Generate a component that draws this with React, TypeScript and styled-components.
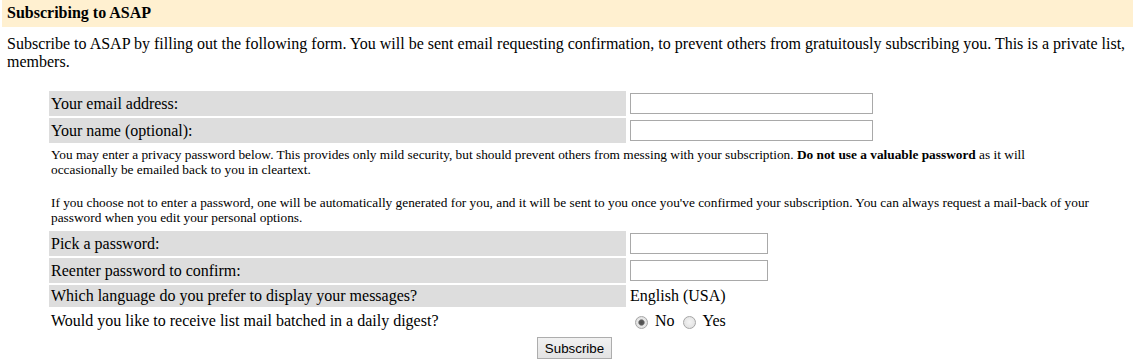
import React from "react";
import styled, { createGlobalStyle } from "styled-components";

const GlobalStyle = createGlobalStyle`
  html, body {
    margin: 0;
    padding: 0;
    background: #ffffff;
  }
  body {
    font-family: "Liberation Serif", "Times New Roman", serif;
    font-size: 16px;
    color: #000000;
  }
`;

const Page = styled.div`
  width: 1133px;
  height: 363px;
  overflow: hidden;
  padding: 0 0 0 2px;
  box-sizing: border-box;
`;

const Header = styled.h2`
  margin: 0;
  height: 27px;
  box-sizing: border-box;
  padding: 4px 5px 5px;
  background: #fff0d0;
  font-size: 16px;
  line-height: 18px;
  font-weight: bold;
  white-space: nowrap;
`;

const Intro = styled.p`
  margin: 8px 0 0;
  padding: 0 5px;
  line-height: 18px;
  white-space: nowrap;
`;

const FormGrid = styled.form`
  display: grid;
  grid-template-columns: 577px 345px 125px;
  column-gap: 2px;
  row-gap: 2px;
  padding: 2px;
  margin: 18px 0 0 45px;
  width: max-content;
`;

const Cell = styled.div<{ $shaded?: boolean }>`
  display: flex;
  align-items: center;
  padding: 2px;
  min-height: 18px;
  background: ${(p) => (p.$shaded ? "#dddddd" : "transparent")};
  line-height: 18px;
  white-space: nowrap;
`;

const FullCell = styled.div<{ $center?: boolean }>`
  grid-column: 1 / span 3;
  display: flex;
  justify-content: ${(p) => (p.$center ? "center" : "flex-start")};
  padding: 2px;
`;

const Note = styled.div`
  font-size: 13.33px;
  line-height: 15px;
  padding-bottom: 2px;
`;

const NotePara = styled.p`
  margin: 0;
  white-space: nowrap;
  & + & {
    margin-top: 18px;
  }
`;

const TextInput = styled.input<{ $w: number }>`
  width: ${(p) => p.$w}px;
  height: 21px;
  box-sizing: border-box;
  margin: 0;
  padding: 1px 2px;
  border: 1px solid #a9a9a9;
  border-radius: 0;
  background: #ffffff;
  font-family: "Liberation Sans", Arial, sans-serif;
  font-size: 13.33px;
  outline: none;
`;

const RadioRow = styled.div`
  display: flex;
  align-items: center;
  min-height: 20px;
  line-height: 18px;
`;

const RadioLabel = styled.label`
  display: flex;
  align-items: center;
  margin-right: 3px;
`;

const Radio = styled.input`
  appearance: none;
  -webkit-appearance: none;
  width: 13px;
  height: 13px;
  box-sizing: border-box;
  margin: 2px 7px 0 5px;
  border-radius: 50%;
  border: 1px solid #a6a6a6;
  background: radial-gradient(circle at 50% 45%, #f4f4f4 0%, #dcdcdc 100%);
  &:checked {
    background: radial-gradient(circle, #4f4f4f 0, #5a5a5a 2.2px, #9a9a9a 3px, #e8e8e8 3.6px, #dadada 100%);
  }
`;

const SubmitButton = styled.button`
  height: 22px;
  box-sizing: border-box;
  margin: 0;
  padding: 0 7px;
  border: 1px solid #adadad;
  border-radius: 0;
  background: linear-gradient(#f1f1f1, #e3e3e3);
  font-family: "Liberation Sans", Arial, sans-serif;
  font-size: 13.33px;
  color: #000000;
`;

export default function App() {
  return (
    <Page>
      <GlobalStyle />
      <Header>Subscribing to ASAP</Header>
      <Intro>
        Subscribe to ASAP by filling out the following form. You will be sent email requesting confirmation, to
        prevent others from gratuitously subscribing you. This is a private list,
        <br />
        members.
      </Intro>
      <FormGrid onSubmit={(e) => e.preventDefault()}>
        <Cell $shaded>Your email address:</Cell>
        <Cell>
          <TextInput $w={243} type="text" name="email" />
        </Cell>
        <Cell />

        <Cell $shaded>Your name (optional):</Cell>
        <Cell>
          <TextInput $w={243} type="text" name="fullname" />
        </Cell>
        <Cell />

        <FullCell>
          <Note>
            <NotePara>
              You may enter a privacy password below. This provides only mild security, but should prevent others
              from messing with your subscription. <b>Do not use a valuable password</b> as it will
              <br />
              occasionally be emailed back to you in cleartext.
            </NotePara>
            <NotePara>
              If you choose not to enter a password, one will be automatically generated for you, and it will be sent
              to you once you've confirmed your subscription. You can always request a mail-back of your
              <br />
              password when you edit your personal options.
            </NotePara>
          </Note>
        </FullCell>

        <Cell $shaded>Pick a password:</Cell>
        <Cell>
          <TextInput $w={138} type="password" name="pw" />
        </Cell>
        <Cell />

        <Cell $shaded>Reenter password to confirm:</Cell>
        <Cell>
          <TextInput $w={138} type="password" name="pw-conf" />
        </Cell>
        <Cell />

        <Cell $shaded>Which language do you prefer to display your messages?</Cell>
        <Cell>English (USA)</Cell>
        <Cell />

        <Cell>Would you like to receive list mail batched in a daily digest?</Cell>
        <Cell>
          <RadioRow>
            <RadioLabel>
              <Radio type="radio" name="digest" value="0" defaultChecked />
              No
            </RadioLabel>
            <RadioLabel>
              <Radio type="radio" name="digest" value="1" />
              Yes
            </RadioLabel>
          </RadioRow>
        </Cell>
        <Cell />

        <FullCell $center>
          <SubmitButton type="submit">Subscribe</SubmitButton>
        </FullCell>
      </FormGrid>
    </Page>
  );
}
